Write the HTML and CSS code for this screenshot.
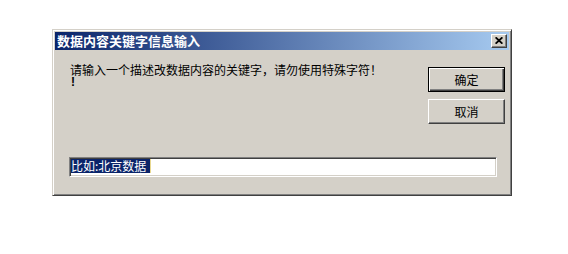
FILE: index.html
```html
<!DOCTYPE html>
<html lang="zh-CN">
<head>
<meta charset="utf-8">
<title>数据内容关键字信息输入</title>
<link rel="stylesheet" href="styles.css">
</head>
<body>
<div class="window">
  <div class="titlebar">
    <span class="title">数据内容关键字信息输入</span>
    <button class="close" aria-label="关闭"><svg width="8" height="7" viewBox="0 0 8 7"><path d="M0.6 0.3 L7.4 6.7 M7.4 0.3 L0.6 6.7" stroke="#000" stroke-width="1.8" fill="none"/></svg></button>
  </div>
  <div class="content">
    <div class="row">
      <div class="message">
        <div class="line">请输入一个描述改数据内容的关键字，请勿使用特殊字符！</div>
        <div class="bang">!</div>
      </div>
      <div class="buttons">
        <button class="btn default">确定</button>
        <button class="btn">取消</button>
      </div>
    </div>
    <div class="input"><span class="sel">比如:北京数据</span><span class="caret"></span></div>
  </div>
</div>
</body>
</html>
```
FILE: styles.css
```css
html, body {
  margin: 0;
  background: #fff;
}
body {
  padding: 29px 0 0 52px;
  font-family: "Noto Sans CJK SC", "Noto Sans", sans-serif;
  font-size: 12px;
  color: #000;
}
.window {
  box-sizing: border-box;
  width: 460px;
  height: 167px;
  background: #d4d0c8;
  border: 1px solid;
  border-color: #d4d0c8 #404040 #404040 #d4d0c8;
  box-shadow: inset 1px 1px #fff, inset -1px -1px #808080;
  padding: 2px;
}
.titlebar {
  height: 18px;
  display: flex;
  align-items: center;
  justify-content: space-between;
  padding: 0 2px;
  background: linear-gradient(to right, #0a246a, #a6caf0);
}
.title {
  color: #fff;
  font-weight: bold;
  font-size: 13px;
  line-height: 14px;
}
.close {
  box-sizing: border-box;
  width: 16px;
  height: 14px;
  padding: 0;
  margin: 0;
  background: #d4d0c8;
  border: 1px solid;
  border-color: #fff #404040 #404040 #fff;
  box-shadow: inset -1px -1px #808080;
  display: flex;
  align-items: center;
  justify-content: center;
}
.close svg {
  display: block;
  margin: 0 1px 1px 0;
}
.content {
  padding: 17px 4px 0 14px;
}
.row {
  display: flex;
  justify-content: space-between;
  align-items: flex-start;
}
.message {
  margin: -4px 0 0 1px;
  line-height: 13px;
}
.bang {
  padding-left: 1px;
  font-family: "Liberation Sans", sans-serif;
  font-weight: bold;
}
.buttons {
  display: flex;
  flex-direction: column;
  gap: 7px;
}
.btn {
  box-sizing: border-box;
  width: 77px;
  height: 25px;
  padding: 0;
  margin: 0;
  font-family: inherit;
  font-size: 12px;
  color: #000;
  background: #d4d0c8;
  border: 1px solid;
  border-color: #fff #404040 #404040 #fff;
  box-shadow: inset -1px -1px #808080;
}
.btn.default {
  border-color: #000;
  box-shadow: inset 1px 1px #fff, inset -1px -1px #404040, inset -2px -2px #808080;
}
.input {
  box-sizing: border-box;
  width: 428px;
  height: 20px;
  margin-top: 33px;
  background: #fff;
  border: 1px solid;
  border-color: #808080 #fff #fff #808080;
  box-shadow: inset 1px 1px #404040, inset -1px -1px #d4d0c8;
  padding: 1px;
  display: flex;
  align-items: flex-start;
}
.sel {
  display: inline-block;
  width: 79px;
  height: 14px;
  line-height: 14px;
  background: #0a246a;
  color: #fff;
  white-space: nowrap;
}
.caret {
  display: inline-block;
  width: 1px;
  height: 14px;
  background: #e8d890;
}
```
